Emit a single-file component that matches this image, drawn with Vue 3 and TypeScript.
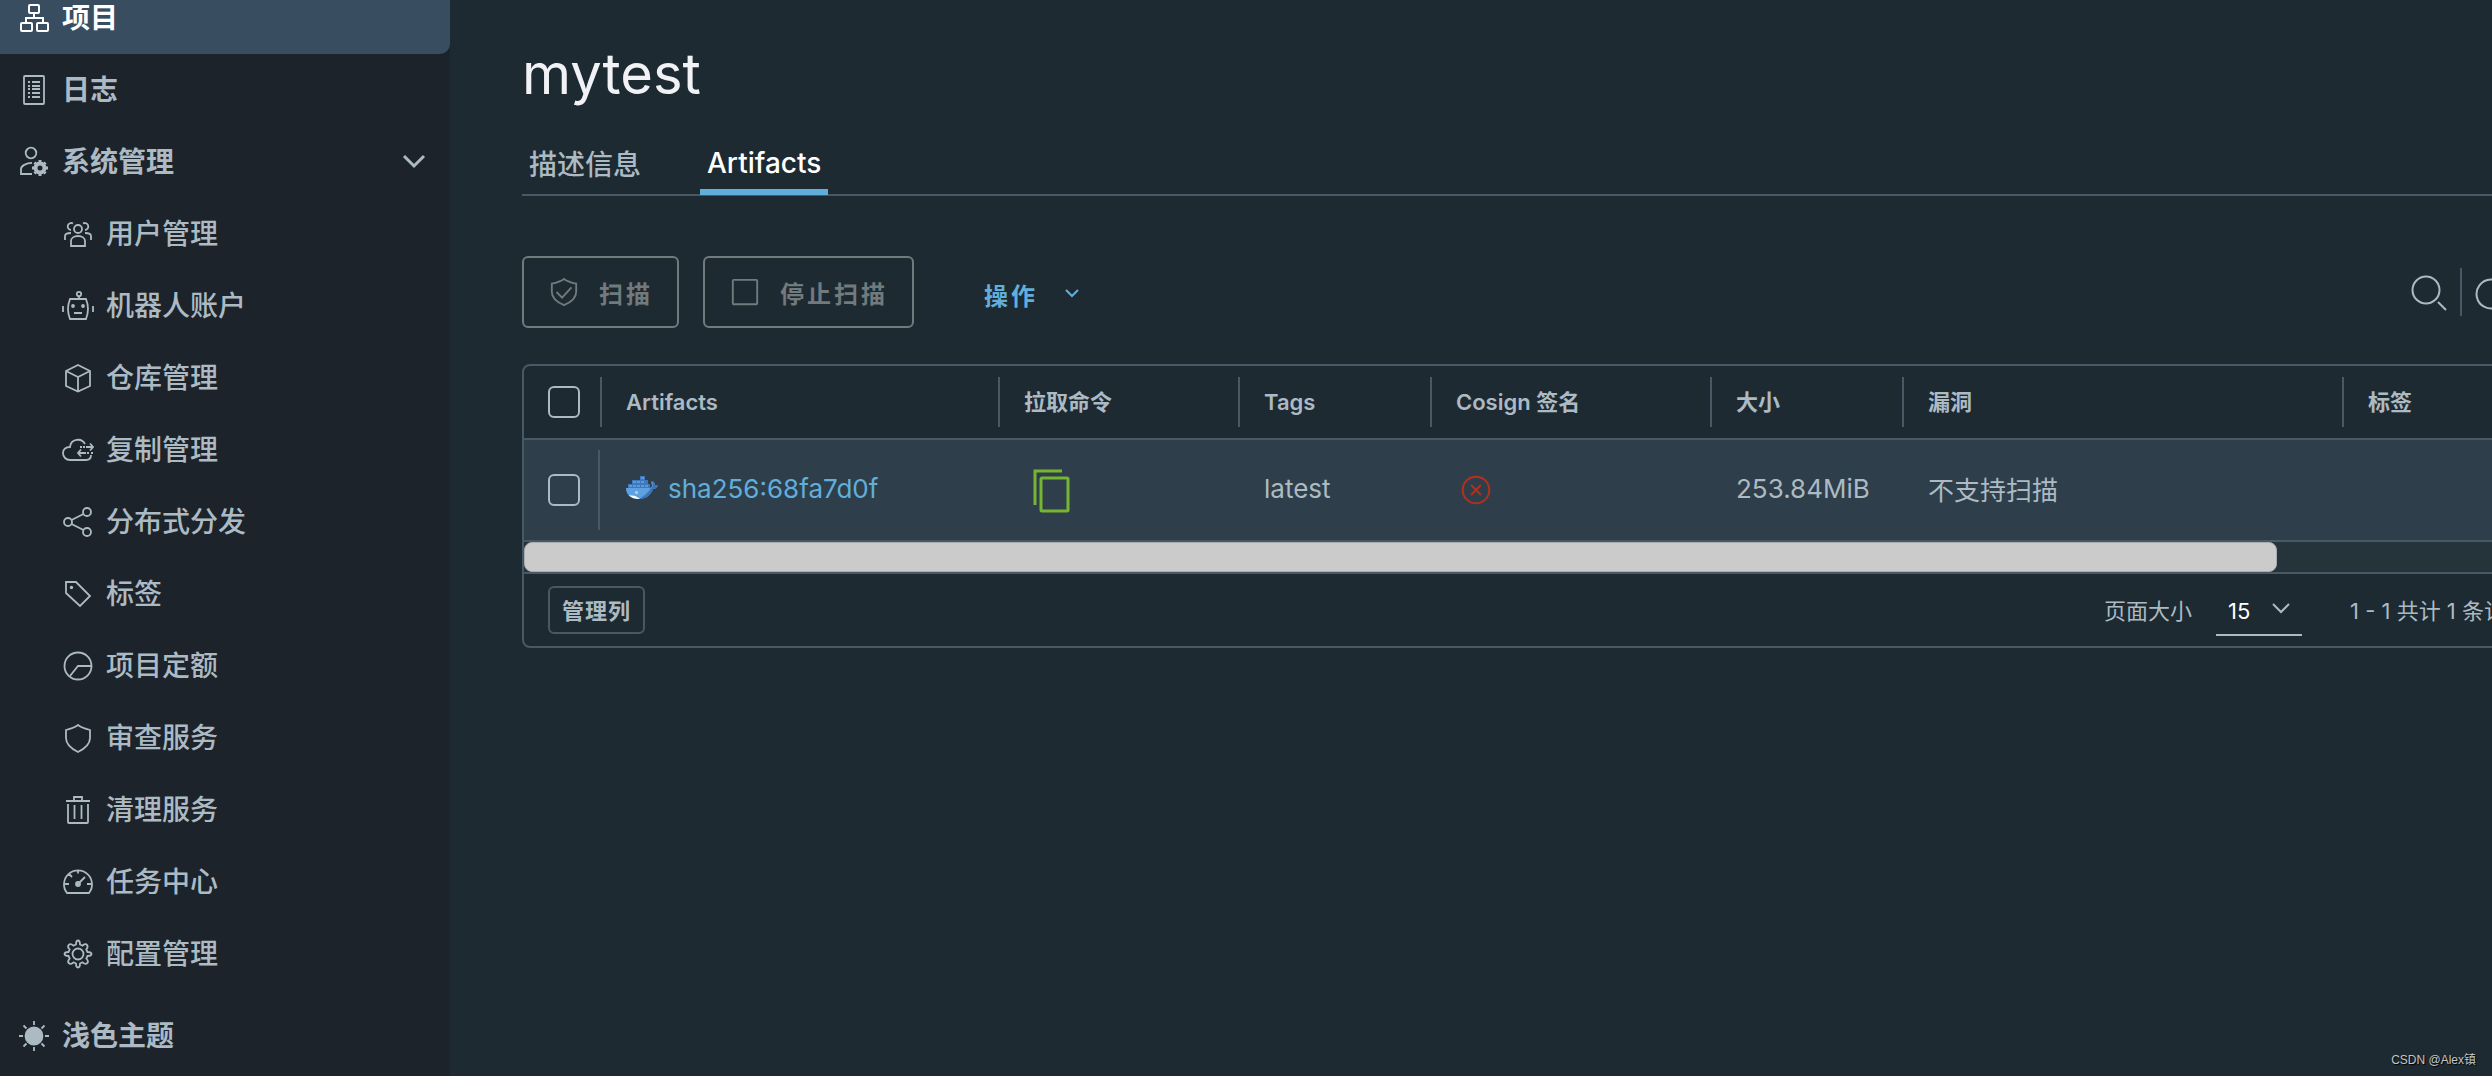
<script setup lang="ts">
import { ref } from 'vue'

interface NavItem {
  label: string
  icon: string
}

const subItems: NavItem[] = [
  { label: '用户管理', icon: 'users' },
  { label: '机器人账户', icon: 'robot' },
  { label: '仓库管理', icon: 'cube' },
  { label: '复制管理', icon: 'cloud' },
  { label: '分布式分发', icon: 'share' },
  { label: '标签', icon: 'tag' },
  { label: '项目定额', icon: 'quota' },
  { label: '审查服务', icon: 'shield' },
  { label: '清理服务', icon: 'trash' },
  { label: '任务中心', icon: 'gauge' },
  { label: '配置管理', icon: 'gear' },
]

const pageSize = ref('15')
const allSelected = ref(false)
const rowSelected = ref(false)
</script>

<template>
  <div class="app">
    <nav class="sidebar" aria-label="主导航">
      <a href="#projects" class="item top active">
        <svg class="icon" viewBox="0 0 32 32" aria-hidden="true">
          <g class="thick">
            <rect x="11" y="3" width="10" height="8" rx="1" />
            <rect x="3" y="21" width="11" height="8" rx="1" />
            <rect x="19" y="21" width="11" height="8" rx="1" />
            <path d="M16 11v5M8 20v-4h17v4" />
          </g>
        </svg>
        <span>项目</span>
      </a>
      <a href="#logs" class="item top">
        <svg class="icon" viewBox="0 0 32 32" aria-hidden="true">
          <rect x="6" y="2" width="20" height="28" rx="1" />
          <path d="M10 8h2M14 8h8M10 12h2M14 12h8M10 15h2M14 15h8M10 19h2M14 19h8M10 23h2M14 23h8" />
        </svg>
        <span>日志</span>
      </a>
      <button type="button" class="item top" aria-expanded="true">
        <svg class="icon" viewBox="0 0 32 32" aria-hidden="true">
          <circle cx="13" cy="7" r="5.3" />
          <path d="M14 28H3v-5c0-3 5-6 11-6.200" />
          <circle cx="22" cy="22" r="4.500" class="ring" />
          <path class="teeth" d="M22 17v-3M22 27v3M17 22h-3M27 22h3M18.500 18.500l-2-2M25.500 18.500l2-2M18.500 25.500l-2 2M25.500 25.500l2 2" />
        </svg>
        <span>系统管理</span>
        <svg class="caret" viewBox="0 0 24 16" aria-hidden="true"><path d="M2 2l10 10L22 2" /></svg>
      </button>

      <a v-for="item in subItems" :key="item.icon" :href="'#' + item.icon" class="item sub">
        <svg class="icon" viewBox="0 0 32 32" aria-hidden="true">
          <template v-if="item.icon === 'users'">
            <circle cx="16" cy="11" r="4" />
            <path d="M9 28v-5c0-3 3-5 7-5s7 2 7 5v5z" />
            <path d="M11 5.500a3.500 3.500 0 1 0-2 6.500M21 5.500a3.500 3.500 0 1 1 2 6.500M3 22v-4c0-2 2-3 6-3M29 22v-4c0-2-2-3-6-3" />
          </template>
          <template v-else-if="item.icon === 'robot'">
            <circle cx="17" cy="4" r="2.200" />
            <path d="M17 6v3M8 9h16q4 10 0 20H8q-4-10 0-20zM12 23h8M1 16v6M31 16v6" />
            <circle cx="11" cy="16" r="1" class="solid" />
            <circle cx="21" cy="16" r="1" class="solid" />
          </template>
          <template v-else-if="item.icon === 'cube'">
            <path d="M16 3l12 6v15l-12 5.500L4 24V9zM4 9l12 6 12-6M16 15v14" />
          </template>
          <template v-else-if="item.icon === 'cloud'">
            <path d="M23 10A8 8 0 0 0 8 13c-4 0-7 2-7 6s3 7 7 7h16c3 0 5-1 5-5" />
            <path d="M24 13h7M28 9.500l3 3.500-3 3.500M18 13h2M21 13h2M24 19h-8M19 15.500L16 19l3 3.500M25 19h2M29 19h2" />
          </template>
          <template v-else-if="item.icon === 'share'">
            <circle cx="6" cy="16" r="4" />
            <circle cx="25" cy="6" r="4" />
            <circle cx="25" cy="26" r="4" />
            <path d="M9.500 14l12-6M9.500 18l12 6" />
          </template>
          <template v-else-if="item.icon === 'tag'">
            <path d="M4 4h10l14 14-10 10L4 15z" />
            <circle cx="9.500" cy="9.500" r="0.800" class="solid" />
          </template>
          <template v-else-if="item.icon === 'quota'">
            <circle cx="16" cy="16" r="13.500" />
            <path d="M29 16H16L8 26" />
          </template>
          <template v-else-if="item.icon === 'shield'">
            <path d="M16 3c4 3 8 4 12 5v8c0 6-6 11-12 14C10 27 4 22 4 16V8c4-1 8-2 12-5z" />
          </template>
          <template v-else-if="item.icon === 'trash'">
            <path d="M4 7h24M12 6V3h8v3M6 10v18q0 1 1 1h18q1 0 1-1V10M12.500 11v14M19.500 11v14" />
          </template>
          <template v-else-if="item.icon === 'gauge'">
            <path d="M5 27A14 14 0 1 1 27 27z M16 3.500v4M3 18h4M25 18h4M7 8l3 3M16 18l7-7" />
            <circle cx="16" cy="18" r="2" class="solid" />
          </template>
          <template v-else>
            <circle cx="16" cy="16" r="5.500" />
            <path
              d="M14 6.500Q14 2.500 16 2.500T18 6.500L20.500 7.700Q23.500 5 25 6.800T24.300 11.500L25.500 14Q29.500 14 29.500 16T25.500 18L24.300 20.500Q27 23.500 25.200 25.200T20.500 24.300L18 25.500Q18 29.500 16 29.500T14 25.500L11.500 24.300Q8.500 27 6.800 25.200T7.700 20.500L6.500 18Q2.500 18 2.500 16T6.500 14L7.700 11.500Q5 8.500 6.800 6.800T11.500 7.700z"
            />
          </template>
        </svg>
        <span>{{ item.label }}</span>
      </a>

      <button type="button" class="item top theme">
        <svg class="icon" viewBox="0 0 32 32" aria-hidden="true">
          <circle cx="16" cy="16" r="8.500" class="solid" />
          <path d="M16 1v4M16 27v4M1 16h4M27 16h4M5.500 5.500l3 3M23.500 23.500l3 3M26.500 5.500l-3 3M8.500 23.500l-3 3" />
        </svg>
        <span>浅色主题</span>
      </button>
    </nav>

    <main class="main">
      <div class="content">
        <h1>mytest</h1>

        <div class="tabs" role="tablist">
          <button type="button" role="tab" aria-selected="false">描述信息</button>
          <button type="button" role="tab" aria-selected="true" class="current">Artifacts</button>
        </div>

        <div class="toolbar">
          <button type="button" class="outline" disabled>
            <svg viewBox="0 0 32 32" aria-hidden="true">
              <path d="M16 2c4 3 8 4 13 5v9c0 6-6 11-13 14C9 27 3 22 3 16V7c5-1 9-2 13-5z" />
              <path d="M8 16l6 6 10-11" />
            </svg>
            <span>扫描</span>
          </button>
          <button type="button" class="outline" disabled>
            <svg viewBox="0 0 32 32" aria-hidden="true"><rect x="3" y="3" width="26" height="26" rx="1" /></svg>
            <span>停止扫描</span>
          </button>
          <button type="button" class="action">
            <span>操作</span>
            <svg viewBox="0 0 16 10" aria-hidden="true"><path d="M2 1l6 6 6-6" /></svg>
          </button>
          <div class="tools">
            <button type="button" aria-label="搜索">
              <svg viewBox="0 0 40 40" aria-hidden="true"><circle cx="18" cy="18" r="13.500" /><path d="M30 30l8 8" /></svg>
            </button>
            <span class="divider"></span>
            <button type="button" aria-label="刷新" class="refresh">
              <svg viewBox="0 0 40 40" aria-hidden="true"><path d="M28 12.500A14.500 14.500 0 1 0 31 26M29 5v8h-8" /></svg>
            </button>
          </div>
        </div>

        <section class="grid">
          <div class="scroller">
            <table>
              <colgroup>
                <col class="c-check" /><col class="c-name" /><col class="c-pull" /><col class="c-tags" />
                <col class="c-sign" /><col class="c-tags" /><col class="c-vuln" /><col />
              </colgroup>
              <thead>
                <tr>
                  <th scope="col" class="check"><input v-model="allSelected" type="checkbox" aria-label="全选" /></th>
                  <th scope="col"><div>Artifacts</div></th>
                  <th scope="col"><div>拉取命令</div></th>
                  <th scope="col"><div>Tags</div></th>
                  <th scope="col"><div>Cosign 签名</div></th>
                  <th scope="col"><div>大小</div></th>
                  <th scope="col"><div>漏洞</div></th>
                  <th scope="col"><div>标签</div></th>
                </tr>
              </thead>
              <tbody>
                <tr>
                  <td class="check">
                    <div><input v-model="rowSelected" type="checkbox" aria-label="选择 sha256:68fa7d0f" /></div>
                  </td>
                  <td class="text">
                    <div class="artifact">
                      <svg class="whale" viewBox="0 0 32 24" aria-hidden="true">
                        <path fill="#3f78bd" d="M2 12V8h4V4h8V0h5v4h3v4h2v4z" />
                        <path fill="#5b9bdd" d="M3 9h3v2H3zM7 9h3v2H7zM11 9h3v2h-3zM15 9h3v2h-3zM19 9h3v2h-3zM7 5h3v2H7zM11 5h3v2h-3zM15 5h3v2h-3zM15 1h3v2h-3z" />
                        <path fill="#5da2e0" d="M0 12h23c2 0 3-1 3-3-1-2-1-3 0-4 2 1 3 2 3 4h3c-1 3-3 4-5 4-2 6-7 10-14 10C5 23 0 19 0 12z" />
                        <path fill="#3d73b8" d="M26 5c2 1 3 2 3 4h3c-1 3-3 4-5 4-2 6-7 10-14 10 5-3 9-6 12-11 2-1 2-3 1-7z" />
                        <path fill="#fff" d="M3 19c3 1 6 0 8 2l3 2C9 23 5 22 3 19z" />
                        <circle cx="10.500" cy="16.500" r="1.500" fill="#b9cfe4" />
                      </svg>
                      <a href="#sha256-68fa7d0f">sha256:68fa7d0f</a>
                    </div>
                  </td>
                  <td>
                    <button type="button" class="copy" aria-label="复制拉取命令">
                      <svg viewBox="0 0 40 48" aria-hidden="true">
                        <path d="M30 5H3v34" />
                        <rect x="9" y="12" width="27" height="33" rx="1" />
                      </svg>
                    </button>
                  </td>
                  <td class="text">latest</td>
                  <td>
                    <svg class="unsigned" viewBox="0 0 30 30" role="img" aria-label="未签名">
                      <circle cx="15" cy="15" r="13.300" />
                      <path d="M10 10l10 10M20 10L10 20" />
                    </svg>
                  </td>
                  <td class="text">253.84MiB</td>
                  <td class="text">不支持扫描</td>
                  <td></td>
                </tr>
              </tbody>
            </table>
            <div class="track"><div class="thumb"></div></div>
          </div>
          <footer>
            <button type="button" class="columns">管理列</button>
            <label for="page-size">页面大小</label>
            <div class="select">
              <select id="page-size" v-model="pageSize">
                <option>15</option>
                <option>25</option>
                <option>50</option>
              </select>
              <svg viewBox="0 0 18 12" aria-hidden="true"><path d="M1 1l8 8 8-8" /></svg>
            </div>
            <span class="count">1 - 1 共计 1 条记录</span>
          </footer>
        </section>
      </div>
      <div class="watermark">CSDN @Alex镇</div>
    </main>
  </div>
</template>

<style>
body {
  margin: 0;
  background: #1e2a32;
}
</style>

<style scoped>
.app {
  display: flex;
  min-height: 100vh;
  overflow: hidden;
  background: #1e2a32;
  color: #acbac3;
  font-family: Inter, "Noto Sans CJK SC", sans-serif;
  font-size: 26px;
}
button {
  padding: 0;
  border: 0;
  background: none;
  color: inherit;
  font: inherit;
  letter-spacing: inherit;
}
a {
  color: inherit;
  text-decoration: none;
}
svg {
  flex: none;
  fill: none;
  stroke: currentColor;
  stroke-width: 2;
}
input[type='checkbox'] {
  appearance: none;
  display: block;
  box-sizing: border-box;
  width: 32px;
  height: 32px;
  margin: 0;
  border: 2px solid #acbac3;
  border-radius: 6px;
}

/* Sidebar, scrolled so that its first entry is partly hidden */
.sidebar {
  display: flex;
  flex: none;
  flex-direction: column;
  width: 450px;
  margin-top: -18px;
  background: #1c232a;
}
.item {
  display: flex;
  align-items: center;
  box-sizing: border-box;
  width: 100%;
  height: 72px;
  padding: 0 24px 0 18px;
  font-size: 28px;
  line-height: 40px;
  text-align: left;
}
.top {
  font-weight: 700;
}
.sub {
  padding-left: 62px;
  font-weight: 500;
}
.active {
  border-radius: 0 0 10px 0;
  background: #394d60;
  color: #fff;
}
.theme {
  margin-top: 10px;
}
.icon {
  width: 32px;
  height: 32px;
  margin-right: 12px;
  stroke-width: 1.8;
}
.thick {
  stroke-width: 2;
}
.solid {
  fill: currentColor;
}
.ring {
  stroke-width: 4;
}
.teeth {
  stroke-width: 3;
}
.caret {
  width: 24px;
  height: 16px;
  margin-left: auto;
  stroke-width: 3;
}

.main {
  display: flex;
  flex: 1;
  flex-direction: column;
  justify-content: space-between;
  min-width: 0;
  overflow: hidden;
}
/* The content runs on past the right edge of the window */
.content {
  width: 100%;
  margin-left: 72px;
}
h1 {
  margin: 42px 0 0;
  color: #f1f2f6;
  font-size: 56px;
  font-weight: 400;
  line-height: 64px;
}
.tabs {
  display: flex;
  gap: 52px;
  height: 62px;
  margin-top: 26px;
  border-bottom: 2px solid #495865;
}
.tabs button {
  height: 63px;
  padding: 4px 7px 0;
  border-bottom: 6px solid transparent;
  font-size: 28px;
  font-weight: 500;
}
.tabs .current {
  border-bottom-color: #62aedb;
  color: #fff;
}

.toolbar {
  display: flex;
  align-items: center;
  height: 72px;
  margin-top: 60px;
  font-size: 24px;
  font-weight: 700;
  letter-spacing: 3px;
}
.outline {
  display: flex;
  align-items: center;
  gap: 20px;
  box-sizing: border-box;
  height: 72px;
  margin-right: 24px;
  padding: 0 24px 0 25px;
  border: 2px solid #717a7d;
  border-radius: 6px;
  color: #717a7d;
}
.outline svg {
  width: 30px;
  height: 30px;
}
.action {
  display: flex;
  align-items: center;
  gap: 26px;
  margin-left: 46px;
  padding-top: 4px;
  color: #62aedb;
}
.action svg {
  width: 16px;
  height: 10px;
}
.tools {
  display: flex;
  align-items: center;
  gap: 12px;
  margin-right: 50px;
  margin-left: auto;
}
.tools svg {
  display: block;
  width: 40px;
  height: 40px;
}
.divider {
  width: 2px;
  height: 48px;
  background: #495865;
}

.grid {
  margin-top: 36px;
  border: 2px solid #495865;
  border-radius: 8px;
  overflow: hidden;
}
.scroller {
  overflow: hidden;
}
table {
  width: 100%;
  border-collapse: collapse;
  table-layout: fixed;
}
.c-check { width: 76px; }
.c-name { width: 398px; }
.c-pull { width: 240px; }
.c-tags { width: 192px; }
.c-sign { width: 280px; }
.c-vuln { width: 440px; }
th {
  height: 72px;
  padding: 0;
  font-size: 22px;
  font-weight: 600;
  line-height: 50px;
  text-align: left;
}
th div {
  padding-left: 24px;
  border-left: 2px solid #495865;
}
th.check input,
td.check input {
  margin-left: 24px;
}
tbody tr {
  border-top: 2px solid #495865;
  border-bottom: 2px solid #495865;
  background: #2e3f4b;
}
td {
  box-sizing: border-box;
  height: 102px;
  padding: 0 0 0 26px;
}
td.text {
  padding-bottom: 4px;
}
td.check {
  padding: 0;
}
td.check div {
  display: flex;
  align-items: center;
  box-sizing: border-box;
  width: 76px;
  height: 80px;
  border-right: 2px solid #495865;
}
.artifact {
  display: flex;
  align-items: center;
  gap: 10px;
}
.artifact a {
  color: #62aedb;
}
.whale {
  width: 32px;
  height: 24px;
  stroke: none;
}
.copy {
  display: block;
  margin-left: 8px;
  color: #76b432;
}
.copy svg {
  display: block;
  width: 40px;
  height: 48px;
  stroke-width: 3;
}
.unsigned {
  display: block;
  width: 30px;
  height: 30px;
  margin-left: 5px;
  color: #b5301c;
}
.track {
  height: 30px;
  border-bottom: 2px solid #495865;
  background: #25333b;
}
.thumb {
  box-sizing: border-box;
  width: 86%;
  height: 30px;
  border: 1px solid #a9adb0;
  border-radius: 8px;
  background: #cbcbcb;
}
footer {
  display: flex;
  align-items: center;
  height: 72px;
  padding: 0 34px 0 24px;
  font-size: 22px;
}
.columns {
  box-sizing: border-box;
  height: 48px;
  margin-right: auto;
  padding: 0 12px 2px;
  border: 2px solid #495865;
  border-radius: 6px;
  font-weight: 600;
  letter-spacing: 1px;
}
.select {
  display: flex;
  align-items: center;
  box-sizing: border-box;
  width: 86px;
  height: 52px;
  margin: 0 48px 0 24px;
  border-bottom: 2px solid #acbac3;
}
select {
  appearance: none;
  flex: 1;
  min-width: 0;
  padding: 4px 0 0 12px;
  border: 0;
  background: none;
  color: #fff;
  font: inherit;
}
.select svg {
  width: 18px;
  height: 12px;
  margin-right: 12px;
}
label,
.count {
  padding-bottom: 2px;
  white-space: nowrap;
}
.watermark {
  padding: 0 16px 6px 0;
  color: #c3c6c8;
  font-family: "Liberation Sans", "Noto Sans CJK SC", sans-serif;
  font-size: 12px;
  line-height: 20px;
  text-align: right;
  text-shadow: 1px 1px 1px #000;
}
</style>
